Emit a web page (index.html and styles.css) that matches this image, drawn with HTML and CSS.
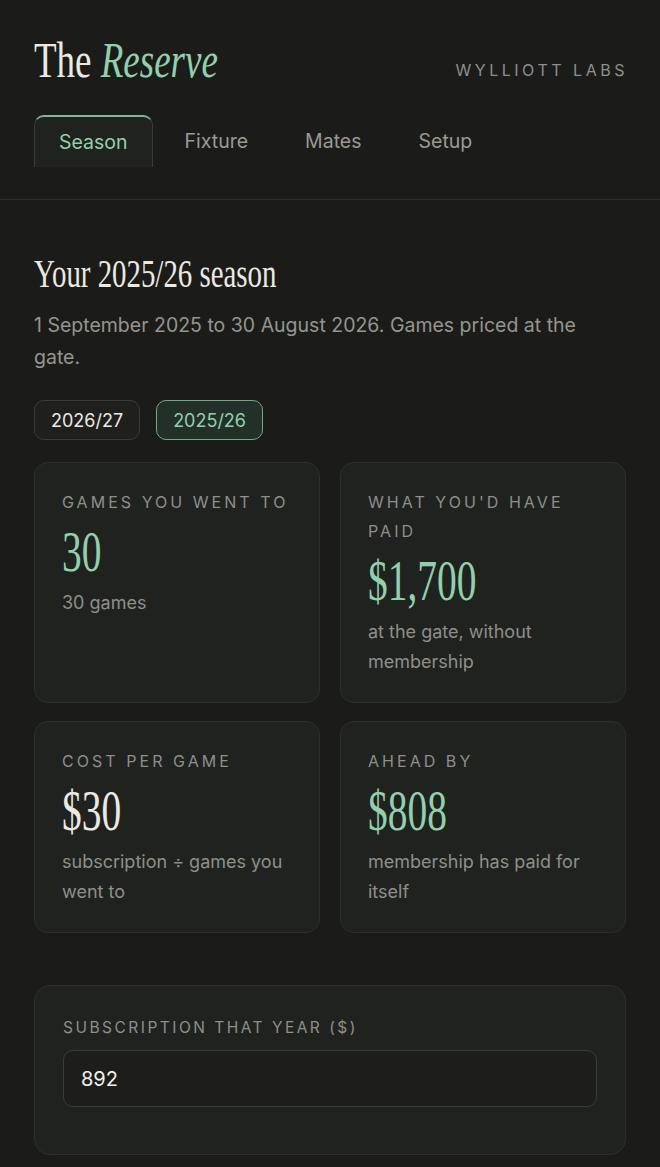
FILE: index.html
```html
<!DOCTYPE html>
<html lang="en">
<head>
<meta charset="utf-8">
<title>The Reserve</title>
<link rel="stylesheet" href="styles.css">
</head>
<body>
<header class="masthead">
  <div class="brand-row">
    <h1 class="brand"><span class="cond">The <em>Reserve</em></span></h1>
    <div class="maker">WYLLIOTT LABS</div>
  </div>
  <nav class="tabs">
    <a class="tab active">Season</a>
    <a class="tab">Fixture</a>
    <a class="tab">Mates</a>
    <a class="tab">Setup</a>
  </nav>
</header>
<main class="content">
  <h2 class="section-title"><span class="cond">Your 2025/26 season</span></h2>
  <p class="lede">1 September 2025 to 30 August 2026. Games priced at the gate.</p>
  <div class="pills">
    <button class="pill">2026/27</button>
    <button class="pill active">2025/26</button>
  </div>
  <section class="stats">
    <div class="card">
      <div class="label">GAMES YOU WENT TO</div>
      <div class="value green"><span class="cond-num">30</span></div>
      <div class="sub">30 games</div>
    </div>
    <div class="card">
      <div class="label">WHAT YOU'D HAVE PAID</div>
      <div class="value green"><span class="cond-num">$1,700</span></div>
      <div class="sub">at the gate, without membership</div>
    </div>
    <div class="card">
      <div class="label">COST PER GAME</div>
      <div class="value"><span class="cond-num">$30</span></div>
      <div class="sub">subscription ÷ games you went to</div>
    </div>
    <div class="card">
      <div class="label">AHEAD BY</div>
      <div class="value green"><span class="cond-num">$808</span></div>
      <div class="sub">membership has paid for itself</div>
    </div>
  </section>
  <section class="form-card">
    <label class="label form-label" for="sub">SUBSCRIPTION THAT YEAR ($)</label>
    <input id="sub" class="field" type="text" value="892">
  </section>
</main>
</body>
</html>
```

FILE: styles.css
```css
* { box-sizing: border-box; }
html, body { margin: 0; padding: 0; }
body {
  background: #1b1c1a;
  color: #e9e7df;
  font-family: "Inter", "Noto Sans", sans-serif;
  width: 660px;
  min-height: 1167px;
}
.cond {
  display: inline-block;
  transform: scaleX(0.74);
  transform-origin: left center;
  white-space: nowrap;
}
.cond-num {
  display: inline-block;
  transform: scaleX(0.68);
  transform-origin: left center;
  white-space: nowrap;
}
.masthead {
  padding: 35px 34px 0;
  border-bottom: 1px solid #2f302d;
}
.brand-row {
  display: flex;
  justify-content: space-between;
  align-items: flex-start;
}
.brand {
  margin: 0;
  font-family: "Liberation Serif", serif;
  font-weight: 400;
  font-size: 50px;
  line-height: 50px;
  color: #ece9e0;
}
.brand em {
  color: #93cfac;
  font-style: italic;
}
.maker {
  margin-top: 25px;
  font-size: 16px;
  line-height: 20px;
  letter-spacing: 0.22em;
  color: #8e8f89;
  margin-right: -2px;
}
.tabs {
  display: flex;
  gap: 7px;
  margin-top: 30px;
  padding-bottom: 32px;
}
.tab {
  height: 52px;
  padding: 0 24px;
  font-size: 19.5px;
  line-height: 50px;
  color: #9a9a93;
  border: 1px solid transparent;
  border-bottom: none;
  border-radius: 10px 10px 0 0;
}
.tab.active {
  color: #93cfac;
  background: #20221f;
  border-color: #3a3c38;
  border-top: 2px solid #7fb897;
}
.content {
  padding: 0 34px 40px;
}
.section-title {
  margin: 50px 0 0;
  font-family: "Liberation Serif", serif;
  font-weight: 400;
  font-size: 39px;
  line-height: 47px;
  color: #ece9e0;
}
.lede {
  margin: 12px 0 0;
  font-size: 19.5px;
  line-height: 32px;
  color: #95958f;
}
.pills {
  display: flex;
  gap: 16px;
  margin-top: 27px;
}
.pill {
  height: 40px;
  padding: 0 16px;
  font-family: inherit;
  font-size: 18px;
  color: #ece9e0;
  background: #1f201e;
  border: 1px solid #3a3c38;
  border-radius: 10px;
}
.pill.active {
  color: #93cfac;
  background: #223028;
  border-color: #6da985;
}
.stats {
  display: grid;
  grid-template-columns: 1fr 1fr;
  column-gap: 20px;
  row-gap: 18px;
  margin-top: 22px;
}
.card {
  background: #20221f;
  border: 1px solid #2d2f2b;
  border-radius: 14px;
  padding: 25px 27px 25px;
}
.label {
  display: block;
  font-size: 16px;
  line-height: 29px;
  letter-spacing: 0.19em;
  color: #8e8f89;
}
.form-label {
  font-size: 15.5px;
  letter-spacing: 0.16em;
}
.value {
  margin-top: 6px;
  font-family: "Liberation Serif", serif;
  font-size: 58px;
  line-height: 58px;
  color: #ece9e0;
}
.value.green { color: #93cfac; }
.sub {
  margin-top: 7px;
  font-size: 18px;
  line-height: 30px;
  color: #8e8f89;
}
.form-card {
  margin-top: 52px;
  background: #20221f;
  border: 1px solid #2d2f2b;
  border-radius: 16px;
  padding: 27px 28px 47px;
}
.field {
  display: block;
  width: 100%;
  height: 57px;
  margin-top: 8px;
  padding: 0 17px;
  font-family: inherit;
  font-size: 20px;
  color: #f2f0e8;
  background: #1d1e1b;
  border: 1px solid #3a3c38;
  border-radius: 10px;
  outline: none;
}
```
